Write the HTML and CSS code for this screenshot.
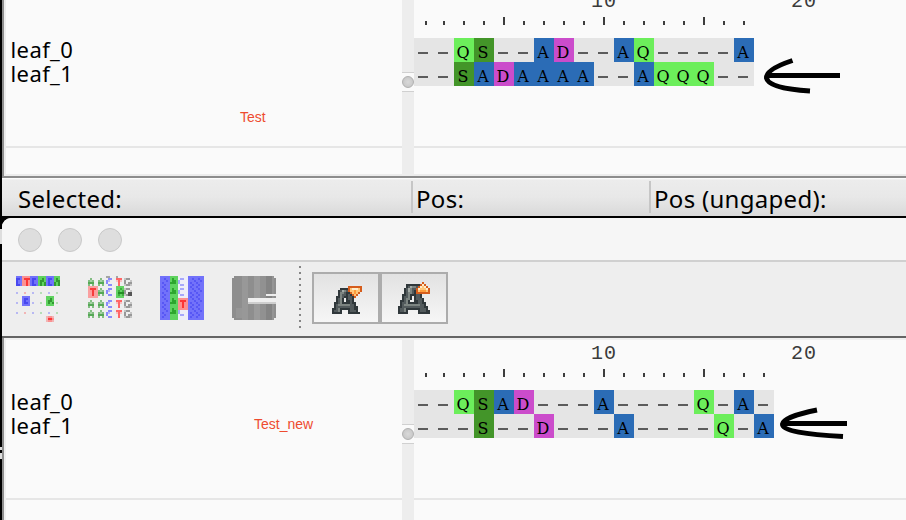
FILE: index.html
```html
<!DOCTYPE html>
<html lang="en">
<head>
<meta charset="utf-8">
<title>Alignment viewer</title>
<link rel="stylesheet" href="styles.css">
</head>
<body>
<main class="desktop">
  <i class="behind behind-a"></i><i class="behind behind-b"></i><i class="behind behind-c"></i>
  <section class="window first">
    <div class="split">
      <div class="names"><div class="name">leaf_0</div><div class="name">leaf_1</div></div>
      <div class="divider"><div class="grip"><i class="knob"></i></div></div>
      <div class="alignment" data-rows="--QS--AD--AQ----A,--SADAAAA--AQQQ--"></div>
    </div>
    <div class="status">
      <div class="field selected">Selected:</div>
      <div class="field pos">Pos:</div>
      <div class="field ungapped">Pos (ungaped):</div>
    </div>
  </section>
  <section class="window second">
    <div class="titlebar"><i class="light"></i><i class="light"></i><i class="light"></i></div>
    <div class="toolbar">
      <svg class="icon" data-icon="diff" width="44" height="46" viewBox="0 0 22 23" shape-rendering="crispEdges"></svg>
      <svg class="icon" data-icon="letters" width="44" height="46" viewBox="0 0 22 23" shape-rendering="crispEdges"></svg>
      <svg class="icon" data-icon="columns" width="44" height="46" viewBox="0 0 22 23" shape-rendering="crispEdges"></svg>
      <svg class="icon" data-icon="gap" width="44" height="46" viewBox="0 0 22 23" shape-rendering="crispEdges"></svg>
      <i class="separator"></i>
      <div class="buttons">
        <div class="button"><svg class="smaller" data-icon="smaller" width="30" height="28" viewBox="0 0 15 14" shape-rendering="crispEdges"></svg></div>
        <div class="button"><svg class="larger" data-icon="larger" width="32" height="32" viewBox="0 0 16 16" shape-rendering="crispEdges"></svg></div>
      </div>
    </div>
    <div class="split">
      <div class="names"><div class="name">leaf_0</div><div class="name">leaf_1</div></div>
      <div class="divider"><div class="grip"><i class="knob"></i></div></div>
      <div class="alignment" data-rows="--QSAD---A----Q-A-,---S--D---A----Q-A"></div>
    </div>
  </section>
  <div class="note note-a">Test</div>
  <div class="note note-b">Test_new</div>
  <svg class="arrow arrow-a" width="90" height="50" viewBox="0 0 90 50"><path d="M80 25.500H9M32.500 10.500C16 16 6 22 6.500 28C8 36 26 39.500 50 41"/></svg>
  <svg class="arrow arrow-b" width="90" height="50" viewBox="0 0 90 50"><path d="M87 23.500H23M57 10C37 14 23 19 22.500 24C22 31 46 34.500 83 36.500"/></svg>
</main>
<script src="script.js"></script>
</body>
</html>
```
FILE: styles.css
```css
* { box-sizing: border-box; }
body { margin: 0; background: #000; }
.desktop {
  position: relative;
  width: 906px;
  height: 520px;
  padding-left: 2px;
  overflow: hidden;
  background: #000;
  color: #000;
  font-family: "Noto Sans", sans-serif;
}
.window { overflow: hidden; }
.first { height: 216px; margin-bottom: 2px; }
.second { height: 302px; border-top-left-radius: 9px; background: #f6f6f6; }

/* sequence panes */
.split { display: flex; border-left: 2px solid #8f8f8f; background: #fafafa; }
.first .split { height: 178px; border-bottom: 2px solid #8c8c8c; box-shadow: inset 2px -2px #ececec; }
.second .split { height: 182px; box-shadow: inset 2px 2px #efefef; }
.names {
  width: 398px;
  flex: none;
  padding: 37px 0 0 6.5px;
  background: linear-gradient(#e6e6e6, #e6e6e6) 2px 146px / 100% 2px no-repeat;
}
.second .names { padding-top: 51px; background-position: 2px 160px; }
.name { height: 24px; font-size: 22px; line-height: 24px; letter-spacing: 0.4px; }
.divider { width: 12px; flex: none; padding-top: 72px; background: #ededed; }
.second .divider { margin-top: 2px; padding-top: 84px; }
.grip {
  height: 20px;
  display: flex;
  align-items: center;
  border-top: 1px solid #d0d0d0;
  border-bottom: 1px solid #d0d0d0;
  background: #fafafa;
}
.knob { width: 12px; height: 12px; border: 1px solid #b0b0b0; border-radius: 50%; background: radial-gradient(#d9d9d9, #c2c2c2); }
.alignment {
  flex: 1;
  height: 176px;
  overflow: hidden;
  background: linear-gradient(#e6e6e6, #e6e6e6) 0 146px / 100% 2px no-repeat;
}
.second .alignment { height: 182px; padding-top: 14px; background-position: 0 160px; }
.scale { display: flex; height: 20px; margin-top: -10px; padding-top: 2px; font: 20px/20px "Liberation Mono", monospace; color: #3a3a3a; }
.scale-mark { width: 200px; padding-left: 177px; letter-spacing: 1px; white-space: nowrap; }
.ticks { display: flex; align-items: flex-end; height: 15px; }
.tick-cell { width: 20px; display: flex; padding-left: 9px; }
.tick-cell:first-child { padding-left: 11px; }
.tick { width: 2px; height: 4px; background: #3c3c3c; }
.tick.tall { height: 8px; }
.rows { padding-top: 13px; }
.row { display: flex; height: 24px; }
.cell {
  width: 20px;
  height: 24px;
  padding-top: 3px;
  padding-right: 2px;
  background: #e5e5e5;
  font: 16px/24px "DejaVu Serif", serif;
  display: flex;
  justify-content: center;
}
.cell.gap { align-items: center; padding-top: 6px; }
.dash { width: 10px; height: 2px; background: #5c5c5c; }
.res-Q { background: #6cee5b; }
.res-S { background: #439529; }
.res-A { background: #2b6cb6; }
.res-D { background: #cb4ccb; }

/* status bar */
.status { display: flex; height: 38px; padding-top: 3px; background: linear-gradient(#fff 0, #ececec 2px, #e8e8e8 50%, #d9d9d9); }
.field { height: 32px; font-size: 24px; line-height: 35px; letter-spacing: 0.3px; white-space: nowrap; }
.selected { width: 409px; padding-left: 16px; }
.pos { width: 238px; border-left: 2px solid #c6c6c6; padding-left: 3px; }
.ungapped { flex: 1; border-left: 2px solid #c6c6c6; padding-left: 3px; }

/* title bar and tools */
.titlebar { display: flex; gap: 16px; height: 44px; padding: 10px 16px; border-bottom: 2px solid #d0d0d0; background: #f6f6f6; }
.light { width: 24px; height: 24px; border: 1px solid #c9c9c9; border-radius: 50%; background: #dedede; }
.toolbar { display: flex; height: 76px; padding-left: 14px; border-bottom: 2px solid #646464; background: #eee; }
.icon { margin: 14px 28px 0 0; flex: none; }
.separator { width: 2px; height: 62px; margin: 4px 11px 0 -5px; background: repeating-linear-gradient(#858585 0 2px, transparent 2px 6px); }
.buttons { display: flex; height: 52px; margin-top: 10px; }
.button { width: 68px; border: 2px solid #acacac; background: linear-gradient(#e2e2e2, #f6f6f6); }
.button svg { display: block; }
.smaller { margin: 12px 0 0 18px; }
.larger { margin: 8px 0 0 16px; }

/* annotations over the windows */
.note { position: absolute; font: 14px/16px "Liberation Sans", sans-serif; color: #ee4b2f; }
.note-a { left: 240px; top: 109px; }
.note-b { left: 254px; top: 416px; }
.arrow { position: absolute; fill: none; stroke: #000; stroke-width: 5; }
.arrow-a { left: 760px; top: 50px; }
.arrow-b { left: 760px; top: 400px; }
.behind { position: absolute; left: 0; width: 2px; background: #ddd; }
.behind-a { top: 229px; height: 15px; }
.behind-b { top: 447px; height: 3px; }
.behind-c { top: 453px; height: 6px; }
```
FILE: script.js
```js
const el = (cls, text = '') => {
  const node = document.createElement('div');
  node.className = cls;
  node.textContent = text;
  return node;
};

document.querySelectorAll('.alignment').forEach(pane => {
  const sequences = pane.dataset.rows.split(',');
  const scale = el('scale');
  scale.append(el('scale-mark', '10'), el('scale-mark', '20'));
  const ticks = el('ticks');
  for (let i = 1; i <= sequences[0].length; i++) {
    const cell = el('tick-cell');
    cell.append(el(i % 5 ? 'tick' : 'tick tall'));
    ticks.append(cell);
  }
  const rows = el('rows');
  sequences.forEach(sequence => {
    const row = el('row');
    [...sequence].forEach(ch => {
      const cell = el(ch === '-' ? 'cell gap' : 'cell res-' + ch, ch === '-' ? '' : ch);
      if (ch === '-') cell.append(el('dash'));
      row.append(cell);
    });
    rows.append(row);
  });
  pane.append(scale, ticks, rows);
});

const rect = (svg, x, y, w, h, fill) => {
  const r = document.createElementNS('http://www.w3.org/2000/svg', 'rect');
  Object.entries({ x, y, width: w, height: h, fill }).forEach(([k, v]) => r.setAttribute(k, v));
  svg.append(r);
};
const paint = (svg, x, y, lines, colors) => lines.forEach((line, j) =>
  [...line].forEach((c, i) => { if (colors[c]) rect(svg, x + i, y + j, 1, 1, colors[c]); }));

const base = {
  A: ['.+.', '+o+', '###', '+.+'],
  C: ['.##', '#+.', '#..', '.##'],
  T: ['###', '+#+', '.#.', '.#.'],
  G: ['+##.', '#..+', '#.##', '+##+']
};
const ink = {
  A: { '#': '#55a855', '+': '#82bd82', o: '#a5d0a5' },
  C: { '#': '#8a8afb', '+': '#b8b8f7' },
  T: { '#': '#ff6666', '+': '#f6c4c4' },
  G: { '#': '#989898', '+': '#c4c4c4' }
};
const icon = name => document.querySelector(`[data-icon="${name}"]`);
const palette = {
  b: '#7272fa', B: '#4848f0', r: '#fa9292', R: '#fb3636', g: '#5fd35f', G: '#329932',
  1: '#b8b8f2', 2: '#f2b5b5', 3: '#b5ddb5', w: '#f7f7fa'
};

let s = icon('diff');
paint(s, 0, 0, [
  'bbbrrrrbbbbggggbbbbggg',
  'BBbrRRRbBBbggGgbBBbgGg',
  'BbbrrRrbBbbgGGgbBbbgGG',
  'BbbrrRrbBbbgGgGbBbbGgG',
  'BBbrrRrbBBbgGgGbBBbGgG'
], palette);
[8, 13, 18].forEach(y => paint(s, 0, y, ['1...2...1...3...1...3'], palette));
paint(s, 3, 10, ['bbbb', 'bBBb', 'bBbb', 'bBBb', 'bbbb'], palette);
paint(s, 15, 10, ['gggg', 'ggGg', 'gGGg', 'gGgG', 'gggg'], palette);
paint(s, 15, 20, ['2rr2', '2RRr', '2rr2'], palette);

s = icon('letters');
rect(s, 0, 5, 5, 6, '#faa0a0');
rect(s, 14, 5, 4, 6, '#63d363');
[1, 6, 12, 17].forEach((y, k) => {
  const dark = { '#': '#238d23', '+': '#3fae3f', o: '#63d363' };
  const red = { '#': '#f73c3c', '+': '#f99' };
  paint(s, k === 1 ? 1 : 0, y, base[k === 1 ? 'T' : 'A'], k === 1 ? red : ink.A);
  paint(s, 5, y, base.A, ink.A);
  paint(s, 9, y, base.C, ink.C);
  paint(s, k === 1 ? 15 : 14, y, base[k === 1 ? 'A' : 'T'], k === 1 ? dark : ink.T);
  paint(s, 18, y, base.G, ink.G);
});
rect(s, 20, 8, 2, 2, '#555');
rect(s, 9, 0, 2, 1, '#a5a5a5');
rect(s, 14, 0, 1, 1, '#a5a5a5');

s = icon('columns');
rect(s, 0, 0, 22, 22, palette.b);
rect(s, 5, 0, 4, 22, palette.g);
rect(s, 9, 0, 5, 22, '#eeeef8');
[1, 6, 11, 16].forEach(y => {
  [1, 15, 18].forEach(x => paint(s, x, y, ['.B.', '..B', 'B..', '.B.', 'B..'], { B: '#5757f5' }));
  paint(s, 5, y, ['.G..', '.GG.', 'GGG.', '.g..'], { G: '#2da62d' });
  paint(s, 9, y, ['.##', '#..', '#..', '.##'], { '#': '#a7a7fb' });
});
rect(s, 9, 11, 5, 6, '#fb9090');
paint(s, 10, 12, ['RRR', '.R.', '.R.', '.R.'], palette);

s = icon('gap');
rect(s, 1, 0, 20, 22, '#8e8e8e');
rect(s, 0, 1, 22, 20, '#8e8e8e');
[[5, 3, '#989898'], [11, 3, '#9b9b9b'], [14, 3, '#919191'], [17, 3, '#848484'], [20, 1, '#959595']].forEach(([x, w, c]) => rect(s, x, 0, w, 22, c));
rect(s, 2, 16, 3, 5, '#969696');
rect(s, 17, 9, 5, 1, '#eee');
rect(s, 8, 11, 14, 2, '#efefef');
rect(s, 8, 13, 14, 1, '#cecece');

const metal = { k: '#30383b', g: '#535b5d', m: '#7d8582', h: '#a3aaa6', o: '#d65d1c', y: '#ffc77a', z: '#ffedca', t: '#ff9b39' };
paint(icon('smaller'), 0, 0, [
  '........ooooooo',
  '....kkkkoyzzzyo',
  '...kghmgoyytyyo',
  '...kmmgkkoytyo.',
  '...kmggkgkoyo..',
  '..kkmgkkggko...',
  '..kgmk.kggk....',
  '..kgmk.kkgk....',
  '.kkgmkkkkgkk...',
  '.kgmmmmmmggk...',
  '.kgggggggggkk..',
  'kkgmkkkkkggkk..',
  'kggmk...kgggk..',
  'kkkkk...kkkkkk.'
], metal);
paint(icon('larger'), 0, 0, [
  '............o...',
  '....kkkkkkkozo..',
  '....kghmmgozyzo.',
  '...kghmggozyyyzo',
  '...kghmgkoytttyo',
  '...kgmmgkooooooo',
  '..kkgmkkkggk....',
  '..kggmk.kggk....',
  '..kgmmk.kgggk...',
  '.kkgmk..kkggk...',
  '.kggmkkkkkggkk..',
  '.kgmmmmmmmmggk..',
  'kkgggggggggggkk.',
  'kggmkkkkkkkgggk.',
  'kggmk.....kgggkk',
  'kkkkk.....kkkkkk'
], metal);
```
